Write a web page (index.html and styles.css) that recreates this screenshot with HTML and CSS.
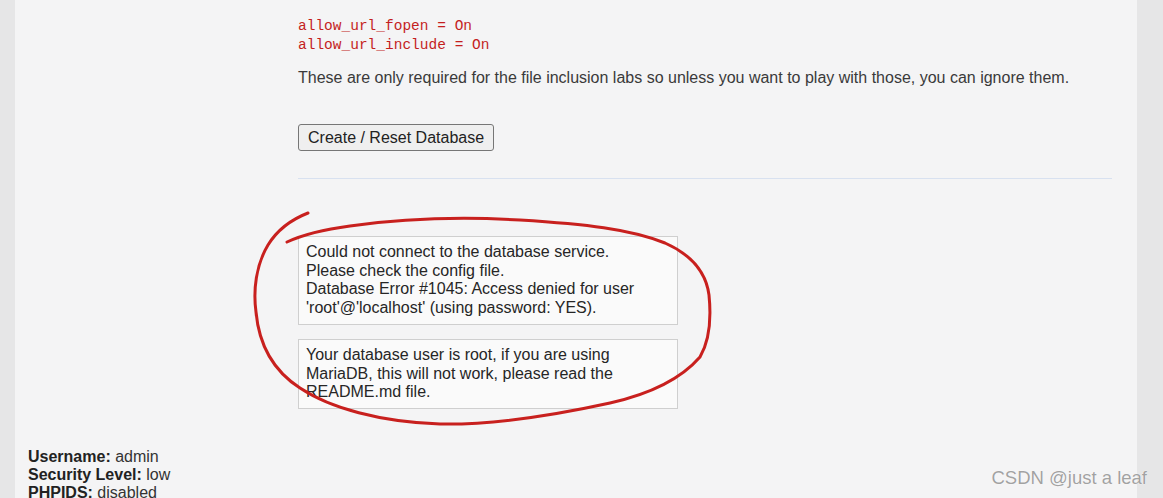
FILE: index.html
```html
<!DOCTYPE html>
<html>
<head>
    <title>Setup :: Damn Vulnerable Web Application</title>
    <link rel="stylesheet" href="styles.css">
</head>
<body>
    <div class="container">
        <div class="main-body">
            <pre class="config">allow_url_fopen = On
allow_url_include = On</pre>
            <p class="note">These are only required for the file inclusion labs so unless you want to play with those, you can ignore them.</p>

            <form class="setup-form">
                <button type="button">Create / Reset Database</button>
            </form>
            <hr class="divider">

            <div class="messages">
                <div class="message">Could not connect to the database service.<br>Please check the config file.<br>Database Error #1045: Access denied for user 'root'@'localhost' (using password: YES).</div>
                <div class="message">Your database user is root, if you are using MariaDB, this will not work, please read the README.md file.</div>
            </div>

            <!-- hand drawn circle over the error messages -->
            <svg class="scribble" width="480" height="240" viewBox="240 200 480 240">
                <path d="M308 213 C290 220 276 232 268 245 C256 265 253 290 256 312 C259 345 272 370 300 388 C330 408 380 422 440 424 C500 425 560 414 610 403 C650 394 680 380 700 357 C710 340 711 315 709 295 C706 272 692 255 665 243 C630 229 585 224 520 220 C450 216 400 219 350 226 C320 230 300 236 287 242"/>
            </svg>
        </div>

        <div class="system-info">
            <div><b>Username:</b> admin</div>
            <div><b>Security Level:</b> low</div>
            <div><b>PHPIDS:</b> disabled</div>
        </div>
    </div>

    <div class="watermark">CSDN @just a leaf</div>
</body>
</html>
```

FILE: styles.css
```css
html, body {
    height: 100%;
    overflow: hidden;
}
body {
    margin: 0;
    background: #e6e6e7;
    font-family: "Liberation Sans", Arial, sans-serif;
    font-size: 16px;
    color: #333;
}
.container {
    background: #f4f4f5;
    margin: 0 26px 0 15px;
    min-height: 100%;
    padding-top: 17px;
}
.main-body {
    position: relative;
    margin-left: 283px;
    margin-right: 25px;
}
.config {
    margin: 0;
    font-family: "Liberation Mono", "Courier New", monospace;
    font-size: 14.5px;
    line-height: 18.5px;
    color: #c41e1e;
}
.note {
    margin: 14px 0 0 0;
    line-height: 19px;
    color: #3a3a3a;
}
.setup-form {
    margin-top: 37px;
}
button {
    font-family: "Liberation Sans", Arial, sans-serif;
    font-size: 16px;
    color: #222;
    background: #efefef;
    border: 1px solid #767676;
    border-radius: 3px;
    padding: 3px 9px;
    height: 27px;
}
.divider {
    border: none;
    border-top: 1px solid #d8e1f0;
    margin: 27px 0 0 0;
}
.messages {
    padding-top: 57px;
}
.message {
    width: 364px;
    padding: 6px 7px;
    margin-bottom: 14px;
    border: 1px solid #cfcfcf;
    background: #fafafa;
    line-height: 18.7px;
    color: #262626;
}
.message:last-child {
    margin-bottom: 0;
}
.scribble {
    position: absolute;
    left: -58px;
    top: 183px;
    overflow: visible;
    pointer-events: none;
}
.scribble path {
    fill: none;
    stroke: #c8201e;
    stroke-width: 3;
    stroke-linecap: round;
}
.system-info {
    margin-top: 39px;
    padding-left: 13px;
    line-height: 18px;
    color: #333;
}
.system-info b {
    color: #222;
}
.watermark {
    position: absolute;
    right: 16px;
    bottom: 9px;
    font-size: 18.5px;
    color: #a2a2a2;
    text-shadow: 0 0 1px #fff, 0 0 1px #fff;
}
```
